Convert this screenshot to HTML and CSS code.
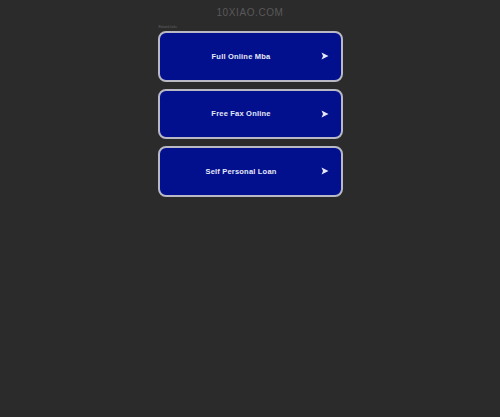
FILE: index.html
```html
<!DOCTYPE html>
<html>
<head>
<meta charset="utf-8">
<link rel="stylesheet" href="styles.css">
</head>
<body>
<div class="page">
  <div class="domain">10XIAO.COM</div>
  <div class="links">
    <div class="label">Related Links</div>
    <a class="btn" href="#"><span class="txt">Full Online Mba</span><svg class="arrow" viewBox="0 0 8 8"><path d="M0.5 0.5 L7.5 4 L0.5 7.5 L2 4 Z" fill="#e6e8f6"/></svg></a>
    <a class="btn" href="#"><span class="txt">Free Fax Online</span><svg class="arrow" viewBox="0 0 8 8"><path d="M0.5 0.5 L7.5 4 L0.5 7.5 L2 4 Z" fill="#e6e8f6"/></svg></a>
    <a class="btn" href="#"><span class="txt">Self Personal Loan</span><svg class="arrow" viewBox="0 0 8 8"><path d="M0.5 0.5 L7.5 4 L0.5 7.5 L2 4 Z" fill="#e6e8f6"/></svg></a>
  </div>
</div>
</body>
</html>
```
FILE: styles.css
```css
html, body {
  margin: 0;
  padding: 0;
  background: #2b2b2b;
  height: 100%;
}
body {
  font-family: "Liberation Sans", Arial, sans-serif;
}
.page {
  display: flex;
  flex-direction: column;
  align-items: center;
}
.domain {
  margin-top: 7px;
  height: 12px;
  line-height: 12px;
  font-size: 10px;
  letter-spacing: 0.6px;
  color: #595959;
}
.links {
  width: 185px;
  margin-top: 6px;
  display: flex;
  flex-direction: column;
  gap: 7px;
}
.label {
  font-size: 3px;
  color: #666;
  height: 6px;
  line-height: 4px;
  margin-bottom: -7px;
  padding-left: 1px;
}
.btn {
  box-sizing: border-box;
  height: 50.5px;
  border: 2px solid #b8b9c4;
  border-radius: 8px;
  background: #02108e;
  display: flex;
  align-items: center;
  text-decoration: none;
  color: #e6e8f6;
  padding-right: 12px;
}
.txt {
  flex: 1;
  text-align center;
  text-align: center;
  font-size: 7.5px;
  font-weight: bold;
  letter-spacing: 0.2px;
  padding-left: 2px;
}
.arrow {
  width: 8px;
  height: 8px;
  margin-right: 0;
}
```
